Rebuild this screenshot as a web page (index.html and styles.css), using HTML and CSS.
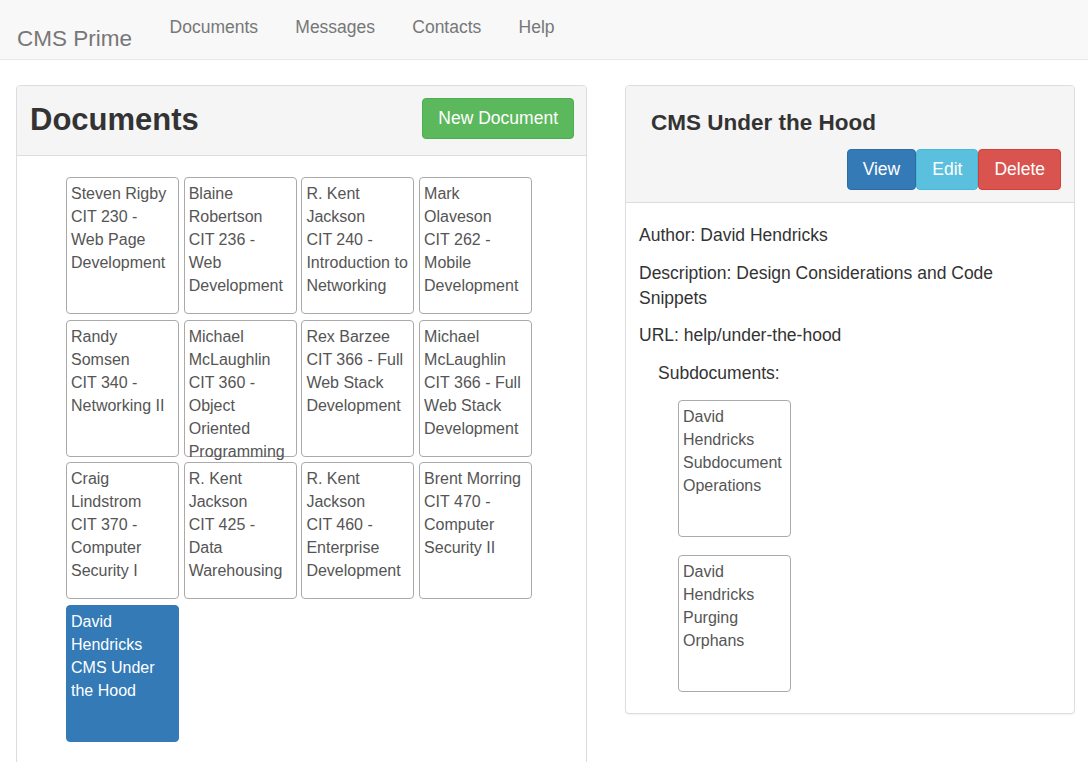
FILE: index.html
```html
<!DOCTYPE html>
<html>
<head>
<meta charset="utf-8">
<link rel="stylesheet" href="styles.css">
</head>
<body>
<nav class="navbar">
  <a class="brand">CMS Prime</a>
  <ul class="nav">
    <li><a>Documents</a></li>
    <li><a>Messages</a></li>
    <li><a>Contacts</a></li>
    <li><a>Help</a></li>
  </ul>
</nav>
<main class="page">
  <section class="panel panel-left">
    <div class="panel-heading heading-row">
      <h2 class="title-lg">Documents</h2>
      <button class="btn btn-success">New Document</button>
    </div>
    <div class="panel-body docs-body">
      <div class="doc-grid">
        <div class="doc">Steven Rigby<br>CIT 230 - Web Page Development</div>
        <div class="doc">Blaine Robertson<br>CIT 236 - Web Development</div>
        <div class="doc">R. Kent Jackson<br>CIT 240 - Introduction to Networking</div>
        <div class="doc">Mark Olaveson<br>CIT 262 - Mobile Development</div>
        <div class="doc">Randy Somsen<br>CIT 340 - Networking II</div>
        <div class="doc">Michael McLaughlin<br>CIT 360 - Object Oriented Programming</div>
        <div class="doc">Rex Barzee<br>CIT 366 - Full Web Stack Development</div>
        <div class="doc">Michael McLaughlin<br>CIT 366 - Full Web Stack Development</div>
        <div class="doc">Craig Lindstrom<br>CIT 370 - Computer Security I</div>
        <div class="doc">R. Kent Jackson<br>CIT 425 - Data Warehousing</div>
        <div class="doc">R. Kent Jackson<br>CIT 460 - Enterprise Development</div>
        <div class="doc">Brent Morring<br>CIT 470 - Computer Security II</div>
        <div class="doc active">David Hendricks<br>CMS Under the Hood</div>
      </div>
    </div>
  </section>
  <section class="panel panel-right">
    <div class="panel-heading detail-heading">
      <h3 class="title-md">CMS Under the Hood</h3>
      <div class="btn-row">
        <button class="btn btn-primary">View</button>
        <button class="btn btn-info">Edit</button>
        <button class="btn btn-danger">Delete</button>
      </div>
    </div>
    <div class="panel-body detail-body">
      <p>Author: David Hendricks</p>
      <p>Description: Design Considerations and Code Snippets</p>
      <p>URL: help/under-the-hood</p>
      <p class="sub-label">Subdocuments:</p>
      <div class="subdocs">
        <div class="doc">David Hendricks Subdocument Operations</div>
        <div class="doc">David Hendricks Purging Orphans</div>
      </div>
    </div>
  </section>
</main>
</body>
</html>
```
FILE: styles.css
```css
* { box-sizing: border-box; }
html, body { margin: 0; padding: 0; }
body {
  font-family: "Liberation Sans", Arial, Helvetica, sans-serif;
  color: #333;
  background: #fff;
  font-size: 17.5px;
  line-height: 25px;
  overflow: hidden;
}
.navbar {
  height: 60px;
  background: #f8f8f8;
  border-bottom: 1px solid #e7e7e7;
  display: flex;
  align-items: flex-start;
}
.brand {
  color: #777;
  font-size: 22.5px;
  line-height: 25px;
  padding: 26px 0 0 17px;
  margin-right: 19px;
}
.nav {
  list-style: none;
  margin: 0;
  padding: 0;
  display: flex;
}
.nav a {
  display: block;
  color: #777;
  font-size: 17.5px;
  line-height: 25px;
  padding: 15px 18.6px 14px;
}
.page {
  display: flex;
  align-items: flex-start;
  padding: 25px 13px 0 16px;
  gap: 38px;
}
.panel {
  border: 1px solid #ddd;
  border-radius: 4px;
  background: #fff;
  box-shadow: 0 1px 1px rgba(0,0,0,.05);
}
.panel-left { width: 571px; }
.panel-right { width: 450px; }
.panel-heading {
  background: #f5f5f5;
  border-bottom: 1px solid #ddd;
  border-radius: 3px 3px 0 0;
}
.heading-row {
  height: 70px;
  display: flex;
  align-items: flex-start;
  justify-content: space-between;
  padding: 12px 12px 0 13px;
}
.title-lg {
  margin: 5px 0 0 0;
  font-size: 31px;
  line-height: 34px;
  font-weight: bold;
  color: #333;
}
.btn {
  font-family: inherit;
  font-size: 17.5px;
  line-height: 25px;
  height: 41px;
  padding: 7px 15px;
  border: 1px solid transparent;
  border-radius: 4px;
  color: #fff;
  cursor: pointer;
}
.btn-success { background: #5cb85c; border-color: #4cae4c; }
.btn-primary { background: #337ab7; border-color: #2e6da4; }
.btn-info { background: #5bc0de; border-color: #46b8da; }
.btn-danger { background: #d9534f; border-color: #d43f3a; }
.docs-body {
  padding: 21px 0 40px 49px;
}
.doc-grid {
  display: grid;
  grid-template-columns: repeat(4, 113px);
  grid-auto-rows: 137px;
  column-gap: 4.7px;
  row-gap: 5.7px;
}
.doc {
  border: 1px solid #aaa;
  border-radius: 4px;
  padding: 4px 4px;
  font-size: 16px;
  line-height: 23px;
  color: #555;
  overflow: visible;
  background: #fff;
}
.doc.active {
  background: #337ab7;
  border-color: #337ab7;
  color: #fff;
}
.detail-heading {
  padding: 24px 13px 12px 25px;
}
.title-md {
  margin: 0;
  font-size: 22.5px;
  line-height: 25px;
  font-weight: bold;
  color: #333;
}
.btn-row {
  display: flex;
  justify-content: flex-end;
  margin-top: 14px;
}
.detail-body {
  padding: 20px 13px 21px 13px;
}
.detail-body p {
  margin: 0 0 12.5px 0;
}
.detail-body .sub-label {
  padding-left: 19px;
  margin-bottom: 14px;
}
.subdocs {
  padding-left: 39px;
  display: flex;
  flex-direction: column;
  gap: 18px;
}
.subdocs .doc {
  width: 113px;
  height: 137px;
}
```
